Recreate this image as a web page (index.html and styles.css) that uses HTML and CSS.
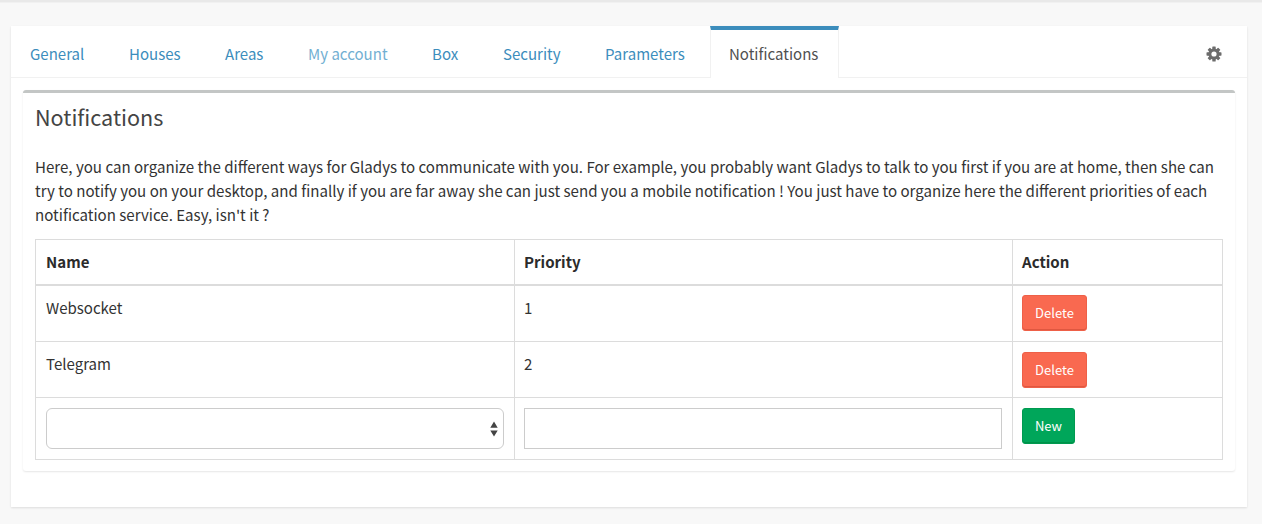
FILE: index.html
```html
<!DOCTYPE html>
<html lang="en">
<head>
<meta charset="utf-8">
<title>Notifications</title>
<link rel="stylesheet" href="styles.css">
</head>
<body>
<main class="page">
  <section class="card">
    <nav class="tabs">
      <a class="tab tab-general">General</a>
      <a class="tab tab-houses">Houses</a>
      <a class="tab tab-areas">Areas</a>
      <a class="tab tab-account">My account</a>
      <a class="tab tab-box">Box</a>
      <a class="tab tab-security">Security</a>
      <a class="tab tab-parameters">Parameters</a>
      <a class="tab tab-active">Notifications</a>
      <svg class="gear" viewBox="0 0 16 16" width="16" height="16"><g fill="#6c6c6c"><rect x="6.3" y="0.5" width="3.4" height="15" rx=".6"/><rect x="6.3" y="0.5" width="3.4" height="15" rx=".6" transform="rotate(45 8 8)"/><rect x="6.3" y="0.5" width="3.4" height="15" rx=".6" transform="rotate(90 8 8)"/><rect x="6.3" y="0.5" width="3.4" height="15" rx=".6" transform="rotate(135 8 8)"/><circle cx="8" cy="8" r="5.6"/></g><circle cx="8" cy="8" r="2.6" fill="#fff"/></svg>
    </nav>
    <div class="box">
      <h3 class="title">Notifications</h3>
      <p class="intro">Here, you can organize the different ways for Gladys to communicate with you. For example, you probably want Gladys to talk to you first if you are at home, then she can<br>try to notify you on your desktop, and finally if you are far away she can just send you a mobile notification ! You just have to organize here the different priorities of each<br>notification service. Easy, isn't it ?</p>
      <table class="table">
        <colgroup><col class="c1"><col class="c2"><col class="c3"></colgroup>
        <thead><tr class="head"><th>Name</th><th>Priority</th><th>Action</th></tr></thead>
        <tbody>
          <tr class="row first"><td>Websocket</td><td>1</td><td><button class="btn danger">Delete</button></td></tr>
          <tr class="row"><td>Telegram</td><td>2</td><td><button class="btn danger">Delete</button></td></tr>
          <tr class="form"><td><div class="select"><svg width="8" height="16" viewBox="0 0 8 16"><path d="M4 0.5L7.7 6.8H.3zM4 15.5L7.7 9.4H.3z" fill="#444"/></svg></div></td><td><input class="input" type="text"></td><td><button class="btn success">New</button></td></tr>
        </tbody>
      </table>
    </div>
  </section>
</main>
</body>
</html>
```
FILE: styles.css
```css
* { box-sizing: border-box; }
body {
  margin: 0;
  background: #f8f8f8;
  color: #333;
  font: 15.04px/24px "Noto Sans CJK SC", "Open Sans", sans-serif;
}
.page {
  height: 524px;
  border-top: 2px solid #e9e9e9;
  padding: 24px 15px 0 11px;
  box-shadow: inset 0 1px 0 #f1f1f1;
}
.card {
  height: 481px;
  background: #fff;
  box-shadow: 0 1px 2px rgba(0, 0, 0, .11);
}
.tabs {
  display: flex;
  height: 52px;
  border-bottom: 1px solid #f1f1f1;
}
.tab {
  padding: 16px 0 0 19px;
  color: #3c8dbc;
  white-space: nowrap;
  flex: none;
}
.tab-general { width: 99px; }
.tab-houses { width: 96px; }
.tab-areas { width: 83px; }
.tab-account { width: 124px; color: #72afd2; }
.tab-box { width: 71px; }
.tab-security { width: 102px; }
.tab-parameters { width: 124px; }
.tab-active {
  width: 129px;
  height: 52px;
  padding: 12px 0 0 18px;
  border: 1px solid #f1f1f1;
  border-top: 4px solid #3c8dbc;
  border-bottom: 0;
  background: #fff;
  color: #505050;
}
.gear { margin: 20px 25px 0 auto; }
.box {
  height: 381px;
  margin: 12px 12px 0;
  padding: 9px 12px 0;
  border-top: 3px solid #c3c6c5;
  border-radius: 3px;
  box-shadow: 0 1px 2px rgba(0, 0, 0, .1);
}
.title {
  margin: 0;
  font-size: 21.6px;
  line-height: 30px;
  font-weight: 400;
  color: #444;
}
.intro {
  margin: 23px 0 12px;
  font-size: 15.085px;
  white-space: nowrap;
}
.table {
  width: 1188px;
  table-layout: fixed;
  border-collapse: separate;
  border-spacing: 0;
  border-top: 1px solid #dcdcdc;
  border-right: 1px solid #dcdcdc;
}
.c1 { width: 479px; }
.c2 { width: 498px; }
.c3 { width: 210px; }
th, td {
  padding: 10px 9px 0;
  border-left: 1px solid #dcdcdc;
  border-bottom: 1px solid #dcdcdc;
  text-align: left;
  vertical-align: top;
}
th:first-child, td:first-child { padding-left: 10px; }
.head { height: 46px; }
th { border-bottom-width: 2px; color: #2b2b2b; }
.row { height: 56px; }
.first .btn { margin-top: -1px; }
.form { height: 62px; }
.btn {
  display: block;
  height: 36px;
  padding: 0;
  border: 1px solid;
  border-radius: 3px;
  color: #fff;
  font: 13px/32px "Noto Sans CJK SC", "Open Sans", sans-serif;
}
.danger {
  width: 65px;
  background: #f96950;
  border-color: #ee6048;
  box-shadow: inset 0 -1px 0 #df5740;
}
.success {
  width: 53px;
  background: #00a65a;
  border-color: #009a50;
  box-shadow: inset 0 -1px 0 #009249;
}
.select {
  display: flex;
  align-items: center;
  justify-content: flex-end;
  width: 458px;
  height: 41px;
  padding-right: 5px;
  border: 1px solid #ccc;
  border-radius: 6px;
}
.input {
  display: block;
  width: 478px;
  height: 41px;
  border: 1px solid #ccc;
  background: #fff;
}
```
